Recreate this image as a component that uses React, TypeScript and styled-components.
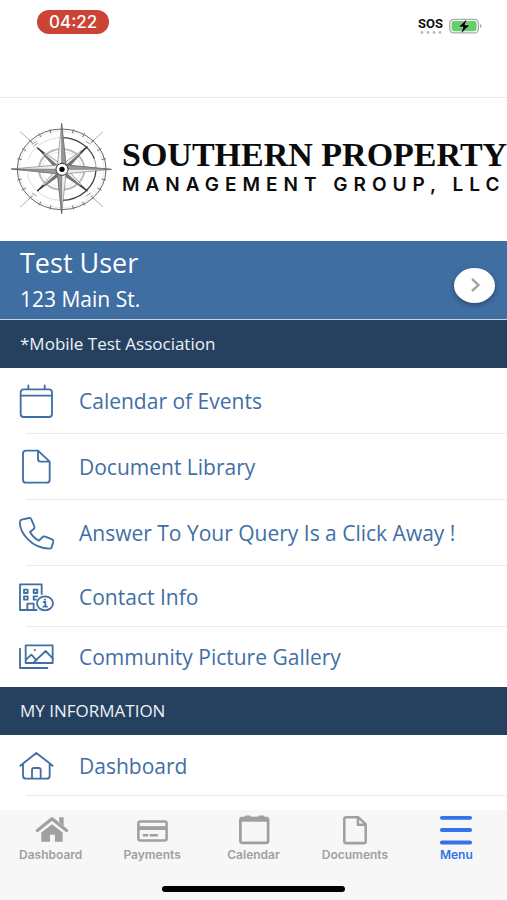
import React from "react";
import styled, { createGlobalStyle } from "styled-components";

const GlobalStyle = createGlobalStyle`
  *, *::before, *::after { box-sizing: border-box; }
  body {
    margin: 0;
    background: #fff;
    font-family: "Open Sans", "Noto Sans", sans-serif;
  }
`;

const Screen = styled.div`
  display: flex;
  flex-direction: column;
  height: 100vh;
  overflow: hidden;
`;

const StatusBar = styled.header`
  display: flex;
  flex: none;
  align-items: flex-start;
  justify-content: space-between;
  height: 98px;
  padding: 10px 25px 0 37px;
  border-bottom: 1px solid #e9e9e9;
`;

const Clock = styled.time`
  padding: 0 12px;
  border-radius: 12px;
  background: #cb4335;
  color: #fff;
  font: 500 17px/24px Inter, sans-serif;
`;

const StatusIcons = styled.div`
  display: flex;
  align-items: center;
  gap: 6px;
  padding-top: 7px;
`;

const Signal = styled.div`
  display: flex;
  flex-direction: column;
  align-items: center;
  color: #111;
  font: 700 13px/14px Roboto, sans-serif;
`;

const Content = styled.main`
  flex: 1;
  min-height: 0;
  overflow-y: auto;
  scrollbar-width: none;
`;

const Brand = styled.div`
  display: flex;
  align-items: center;
  gap: 10px;
  height: 143px;
  padding: 0 0 3px 11px;
  overflow: hidden;
  color: #0b0b0b;
  white-space: nowrap;

  svg { flex: none; }
`;

const BrandText = styled.div`
  display: flex;
  flex-direction: column;
  gap: 2px;
`;

const BrandName = styled.div`
  font: 700 34px/32px "Liberation Serif", serif;
`;

const BrandSub = styled.div`
  font: 600 19px/24px Inter, sans-serif;
  letter-spacing: 6px;
`;

const Profile = styled.section`
  display: flex;
  align-items: center;
  justify-content: space-between;
  height: 79px;
  padding: 0 12px 2px 20px;
  border-bottom: 1px solid #c6d3e1;
  background: #3f6ea3;
  color: #fff;
`;

const UserName = styled.h1`
  margin: 0;
  font-size: 27px;
  font-weight: 400;
  line-height: 40px;
`;

const Address = styled.p`
  margin: 0;
  font-size: 21px;
  line-height: 32px;
`;

const RoundButton = styled.button`
  display: flex;
  align-items: center;
  justify-content: center;
  width: 41px;
  height: 35px;
  margin-top: 12px;
  padding: 0;
  border: 0;
  border-radius: 50%;
  background: #fff;
  box-shadow: 0 2px 5px rgba(0, 0, 0, 0.35);
`;

const SectionTitle = styled.h2`
  margin: 0;
  padding: 0 20px;
  background: #25415f;
  color: #eef2f6;
  font-size: 17px;
  font-weight: 400;
  line-height: 48px;
`;

const List = styled.ul`
  margin: 0;
  padding: 0;
  list-style: none;
`;

const Item = styled.li<{ $tall?: boolean; $last?: boolean }>`
  height: ${(p) => (p.$tall ? 66 : p.$last ? 60 : 61)}px;
  background: ${(p) =>
    p.$last ? "none" : "linear-gradient(#e9ebed, #e9ebed) 26px 100% / 100% 1px no-repeat"};
`;

const ItemLink = styled.a`
  display: flex;
  align-items: center;
  gap: 25px;
  height: 100%;
  padding-left: 18px;
  color: #416fa5;
  font-size: 21px;
  line-height: 28px;
  text-decoration: none;
  white-space: nowrap;
`;

const RowSvg = styled.svg`
  flex: none;
  width: 36px;
  height: 36px;
  fill: none;
  stroke: currentColor;
  stroke-width: 5.5;
  stroke-linecap: round;
  stroke-linejoin: round;
`;

const BottomBar = styled.footer`
  flex: none;
  height: 90px;
  background: #f7f7f7;
`;

const Tabs = styled.nav`
  display: flex;
  height: 76px;
  padding-top: 3px;
`;

const Tab = styled.button<{ $active?: boolean }>`
  display: flex;
  flex: 1;
  flex-direction: column;
  align-items: center;
  gap: 1px;
  height: 50px;
  padding: 0;
  border: 0;
  background: none;
  color: ${(p) => (p.$active ? "#3373e6" : "#a0a0a0")};
  font: 600 12px/14px Inter, sans-serif;
`;

const TabSvg = styled.svg`
  width: 36px;
  height: 34px;
  fill: none;
  stroke: currentColor;
`;

const HomeIndicator = styled.div`
  width: 36%;
  height: 6px;
  margin: 0 auto;
  border-radius: 3px;
  background: #000;
`;

const ticks = Array.from({ length: 24 }, (_, i) => (i * Math.PI) / 12);

const Compass = () => (
  <svg width="101" height="91" viewBox="33 39 303 273" fill="none" aria-hidden="true">
    <ellipse cx="185" cy="178" rx="133" ry="121" stroke="#666" strokeWidth="3" />
    <ellipse cx="185" cy="178" rx="127" ry="115" stroke="#bbb" strokeWidth="1" />
    {ticks.map((a) => (
      <path
        key={a}
        d={`M${185 + 124 * Math.cos(a)} ${178 + 112 * Math.sin(a)}L${185 + 138 * Math.cos(a)} ${178 + 125 * Math.sin(a)}`}
        stroke="#777"
        strokeWidth="3"
      />
    ))}
    <path d="M185 83a104 95 0 0 1 98 63M288 180a104 95 0 0 1-103 91" stroke="#444" strokeWidth="4" />
    <path d="M283 146a104 95 0 0 1 5 34" stroke="#999" strokeWidth="3" />
    <path d="M185 83a104 95 0 0 0-100 66M82 190a104 95 0 0 0 103 81" stroke="#ccc" strokeWidth="2" />
    <ellipse cx="185" cy="178" rx="68" ry="61" stroke="#bbb" strokeWidth="6" />
    <ellipse cx="185" cy="178" rx="58" ry="52" stroke="#aaa" strokeWidth="1" />
    <path d="M61 65l36 33M309 65l-36 33M61 291l36-33M309 291l-36-33" stroke="#888" strokeWidth="2" />
    <path d="M96 103l14-9M100 108l14-9M258 94l14 9M96 249l14 9M258 258l14-9" stroke="#999" strokeWidth="3" />
    <g stroke="#555" strokeWidth="1.5">
      <path d="M112 113l81 56-16 17zM262 110l-69 76-16-17zM112 243l65-74 16 17zM262 243l-85-57 16-17z" fill="#eee" />
      <path d="M112 113l73 65-8 8zM262 110l-77 68 8 8zM112 243l73-65 8 8zM262 243l-77-65-8 8z" fill="#777" />
      <path d="M185 40l13 125-13 13-13-13zM185 311l-13-120 13-13 13 13zM34 177l137-12 14 13-14 13zM334 178l-135 13-14-13 14-13z" fill="#eee" />
      <path d="M185 40l13 125-13 13zM185 311l-13-120 13-13zM34 177l151 1-14 13zM334 178l-149 0 14-13z" fill="#999" />
    </g>
    <path d="M112 113l20 17M262 110l-20 18M112 243l18-17M262 243l-22-17" stroke="#333" strokeWidth="4" />
    <circle cx="186" cy="178" r="18" fill="#fff" stroke="#333" strokeWidth="3" />
    <circle cx="186" cy="178" r="8" fill="#000" />
  </svg>
);

const SignalDots = () => (
  <svg width="22" height="3" viewBox="0 0 22 3" fill="#bbb" aria-hidden="true">
    <circle cx="2" cy="1.5" r="1.4" />
    <circle cx="8" cy="1.5" r="1.4" />
    <circle cx="14" cy="1.5" r="1.4" />
    <circle cx="20" cy="1.5" r="1.4" />
  </svg>
);

const Battery = () => (
  <svg width="33" height="16" viewBox="0 0 33 16" role="img" aria-label="Battery charging">
    <rect x="0.8" y="1.3" width="28.6" height="13.6" rx="4" fill="#fff" stroke="#aaa" strokeWidth="1.3" />
    <rect x="2.6" y="3" width="25" height="10.2" rx="2.4" fill="#65ce6b" />
    <path d="M31 6v4q1.6-.6 1.6-2T31 6z" fill="#aaa" />
    <path d="M17.8 0.9L9.6 9h4.4L12 15.600 20.900 7h-4.800z" fill="#000" stroke="#fff" strokeWidth="0.4" />
  </svg>
);

const icons = {
  calendar: (
    <RowSvg viewBox="54 39 108 108" aria-hidden="true">
      <rect x="62" y="58" width="94" height="83" rx="9" />
      <path d="M62 77h94M85 46v12M134 46v12" />
    </RowSvg>
  ),
  document: (
    <RowSvg viewBox="54 239 108 108" aria-hidden="true">
      <path d="M78 244h36l35 33v54a9 9 0 0 1-9 9H78a9 9 0 0 1-9-9v-78a9 9 0 0 1 9-9zM114 245v24a8 8 0 0 0 8 8h26" />
    </RowSvg>
  ),
  phone: (
    <RowSvg viewBox="54 436 108 108" aria-hidden="true">
      <path d="M65 450l22-5q5-1 7 4l9 21q2 4-2 8l-11 9q10 18 27 26l11-11q3-3 8-1l20 8q5 2 4 7l-5 17q-1 4-6 4-39-1-65-28T60 457q0-6 5-7z" />
    </RowSvg>
  ),
  contact: (
    <RowSvg viewBox="54 53 108 108" strokeLinejoin="miter" aria-hidden="true">
      <path d="M125 98V69H60v77h50M82 146v-19h19v19" />
      <path d="M72 85h11v10H72zM101 85h11v10h-11zM72 105h11v10H72zM108 115h-7v-10h11" />
      <ellipse cx="135" cy="126" rx="24" ry="21" />
      <path d="M131 122h5v14M130 136h11M135 114v1" />
    </RowSvg>
  ),
  gallery: (
    <RowSvg viewBox="54 237 108 108" aria-hidden="true">
      <path d="M77 256h81v53H77zM60 266v58h82" />
      <path d="M78 299l16-15 16 17M101 307l36-34 21 22M104 270h1" />
    </RowSvg>
  ),
  house: (
    <RowSvg viewBox="54 204 108 108" aria-hidden="true">
      <path d="M61 257l48-38 49 38M69 252v35q0 9 10 9h61q9 0 9-9v-35M96 295v-25q0-6 6-6h14q6 0 6 6v25" />
    </RowSvg>
  ),
};

type RowData = { icon: keyof typeof icons; label: string; tall?: boolean; last?: boolean };

const associationRows: RowData[] = [
  { icon: "calendar", label: "Calendar of Events", tall: true },
  { icon: "document", label: "Document Library", tall: true },
  { icon: "phone", label: "Answer To Your Query Is a Click Away !", tall: true },
  { icon: "contact", label: "Contact Info" },
  { icon: "gallery", label: "Community Picture Gallery", last: true },
];

const personalRows: RowData[] = [{ icon: "house", label: "Dashboard" }];

const MenuList = ({ rows }: { rows: RowData[] }) => (
  <List>
    {rows.map((row) => (
      <Item key={row.label} $tall={row.tall} $last={row.last}>
        <ItemLink href="#">
          {icons[row.icon]}
          {row.label}
        </ItemLink>
      </Item>
    ))}
  </List>
);

const tabs = [
  {
    label: "Dashboard",
    art: (
      <>
        <path d="M4.500 17.500L19.500 5.500l15 12" strokeWidth="3.400" strokeLinecap="round" strokeLinejoin="round" />
        <path d="M19.500 11l11 8.500v9.500h-8v-7h-5v7h-9v-9.500zM27 4h4.500v9L27 9z" fill="currentColor" stroke="none" />
      </>
    ),
  },
  {
    label: "Payments",
    art: (
      <>
        <rect x="4.500" y="8.200" width="29" height="19.600" rx="2" strokeWidth="2.600" />
        <path d="M4.500 15h29" strokeWidth="4" />
        <path d="M9 22.500h5.500M16 22.500h8.500" strokeWidth="2.600" />
      </>
    ),
  },
  {
    label: "Calendar",
    art: (
      <>
        <rect x="4.500" y="4.800" width="28.500" height="25.500" rx="2" strokeWidth="2.800" />
        <path d="M4 6h29" strokeWidth="5" />
        <path d="M10 3.300h4M24 3.300h4" strokeWidth="2.200" strokeLinecap="round" />
      </>
    ),
  },
  {
    label: "Documents",
    art: (
      <path
        d="M9.500 4h12.500l7.500 7v17.500a2 2 0 0 1-2 2h-18a2 2 0 0 1-2-2V6a2 2 0 0 1 2-2zM21.500 4v7.500h8"
        strokeWidth="2.600"
        strokeLinejoin="round"
      />
    ),
  },
  {
    label: "Menu",
    active: true,
    art: <path d="M4 4.500h29M4 17h29M4 29.800h29" strokeWidth="4" strokeLinecap="round" />,
  },
];

export default function App() {
  return (
    <>
      <GlobalStyle />
      <Screen>
        <StatusBar>
          <Clock>04:22</Clock>
          <StatusIcons>
            <Signal>
              SOS
              <SignalDots />
            </Signal>
            <Battery />
          </StatusIcons>
        </StatusBar>
        <Content>
          <Brand>
            <Compass />
            <BrandText>
              <BrandName>SOUTHERN PROPERTY</BrandName>
              <BrandSub>MANAGEMENT GROUP, LLC</BrandSub>
            </BrandText>
          </Brand>
          <Profile>
            <div>
              <UserName>Test User</UserName>
              <Address>123 Main St.</Address>
            </div>
            <RoundButton aria-label="Open profile">
              <svg width="12" height="16" viewBox="0 0 12 16" fill="none" stroke="#a5a5a5" strokeWidth="2.400" aria-hidden="true">
                <path d="M3 2l6.500 6L3 14" />
              </svg>
            </RoundButton>
          </Profile>
          <SectionTitle>*Mobile Test Association</SectionTitle>
          <MenuList rows={associationRows} />
          <SectionTitle>MY INFORMATION</SectionTitle>
          <MenuList rows={personalRows} />
        </Content>
        <BottomBar>
          <Tabs aria-label="Main">
            {tabs.map((tab) => (
              <Tab key={tab.label} $active={tab.active} aria-current={tab.active ? "page" : undefined}>
                <TabSvg viewBox="0 0 37 34" aria-hidden="true">{tab.art}</TabSvg>
                {tab.label}
              </Tab>
            ))}
          </Tabs>
          <HomeIndicator />
        </BottomBar>
      </Screen>
    </>
  );
}
